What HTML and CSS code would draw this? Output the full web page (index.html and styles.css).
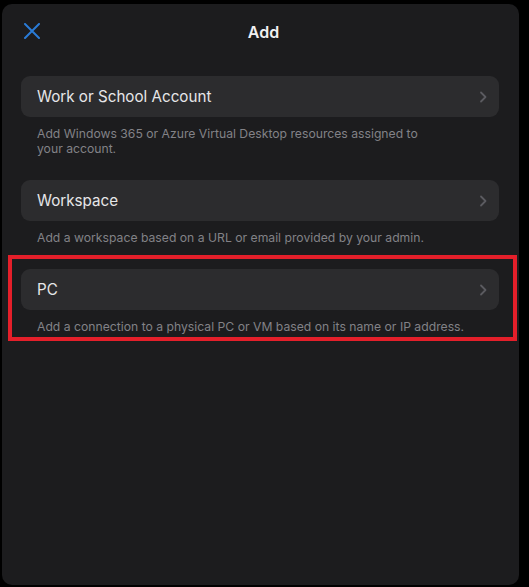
FILE: index.html
```html
<!DOCTYPE html>
<html lang="en">
<head>
  <meta charset="UTF-8" />
  <meta name="viewport" content="width=device-width, initial-scale=1.0"/>
  <title>Add</title>
  <link rel="stylesheet" href="styles.css">
</head>
<body>
  <div class="sheet">
    <div class="sheet-header">
      <button class="close-btn" aria-label="Close">
        <svg width="18" height="16" viewBox="0 0 18 16">
          <path d="M2 1 L16 15 M16 1 L2 15" stroke="#2a7bd6" stroke-width="2" stroke-linecap="round" fill="none"/>
        </svg>
      </button>
      <h1 class="sheet-title">Add</h1>
    </div>

    <div class="option-list">
      <div class="option">
        <button class="option-card">
          <span>Work or School Account</span>
          <svg class="chevron" width="8" height="12" viewBox="0 0 8 12">
            <path d="M2 1.5 L6.5 6 L2 10.5" stroke="#5b5b60" stroke-width="1.8" fill="none" stroke-linecap="round" stroke-linejoin="round"/>
          </svg>
        </button>
        <p class="option-desc">Add Windows 365 or Azure Virtual Desktop resources assigned to<br>your account.</p>
      </div>

      <div class="option">
        <button class="option-card">
          <span>Workspace</span>
          <svg class="chevron" width="8" height="12" viewBox="0 0 8 12">
            <path d="M2 1.5 L6.5 6 L2 10.5" stroke="#5b5b60" stroke-width="1.8" fill="none" stroke-linecap="round" stroke-linejoin="round"/>
          </svg>
        </button>
        <p class="option-desc">Add a workspace based on a URL or email provided by your admin.</p>
      </div>

      <div class="option highlight">
        <button class="option-card">
          <span>PC</span>
          <svg class="chevron" width="8" height="12" viewBox="0 0 8 12">
            <path d="M2 1.5 L6.5 6 L2 10.5" stroke="#5b5b60" stroke-width="1.8" fill="none" stroke-linecap="round" stroke-linejoin="round"/>
          </svg>
        </button>
        <p class="option-desc">Add a connection to a physical PC or VM based on its name or IP address.</p>
      </div>
    </div>
  </div>
</body>
</html>
```

FILE: styles.css
```css
* {
  box-sizing: border-box;
  padding: 0;
  margin: 0;
}

body {
  background-color: #000;
  font-family: Inter, "Open Sans", Arial, sans-serif;
  color: #e8e8ea;
}

.sheet {
  background-color: #1c1c1e;
  width: 517px;
  height: 581px;
  margin: 4px 0 0 2px;
  border-radius: 10px;
  overflow: hidden;
}

.sheet-header {
  height: 54px;
  display: flex;
  align-items: center;
  justify-content: center;
  padding-left: 6px;
  position: relative;
}

.close-btn {
  position: absolute;
  left: 21px;
  top: 19px;
  background: none;
  border: none;
  width: 18px;
  height: 16px;
  display: flex;
  cursor: pointer;
}

.sheet-title {
  font-size: 16px;
  font-weight: 600;
  color: #f0f0f2;
  margin-top: 1px;
}

.option-list {
  padding: 18px 20px 0 19px;
  display: flex;
  flex-direction: column;
  gap: 24px;
}

.option-card {
  width: 100%;
  height: 41px;
  background-color: #2c2c2e;
  border: none;
  border-radius: 9px;
  display: flex;
  align-items: center;
  justify-content: space-between;
  padding: 0 12px 0 16px;
  font-family: inherit;
  font-size: 15.2px;
  color: #e6e6e8;
  text-align: left;
  cursor: pointer;
}

.option-desc {
  margin-top: 9px;
  padding-left: 16px;
  font-size: 12.2px;
  line-height: 15px;
  color: #828287;
}

.highlight {
  margin: -14px -18px 0 -13px;
  padding: 10px 14px 3px 9px;
  border: 4px solid #e41f2a;
}
```
